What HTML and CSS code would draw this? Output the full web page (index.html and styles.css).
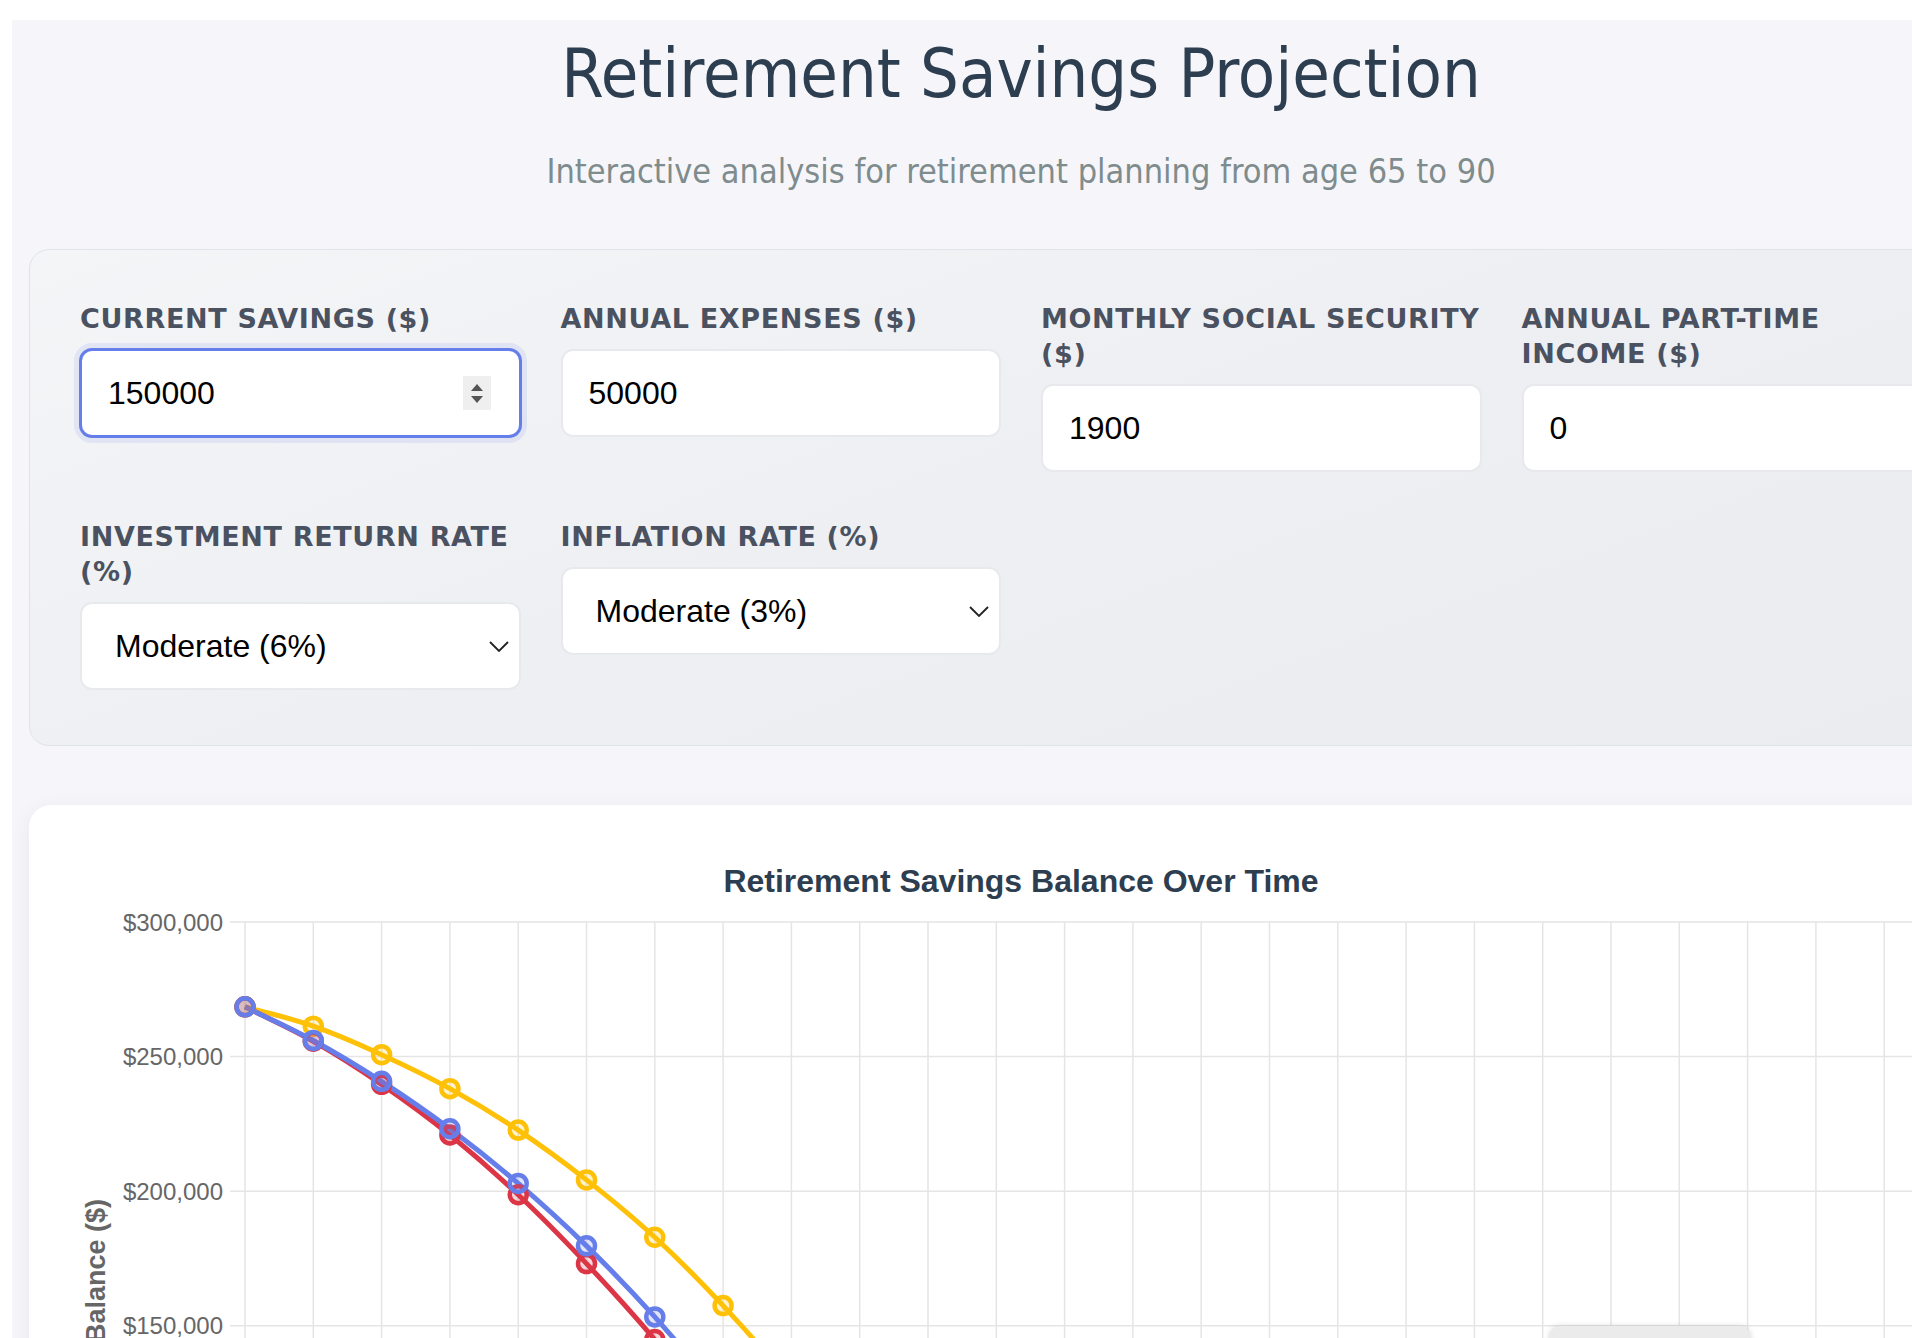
FILE: index.html
```html
<!DOCTYPE html>
<html>
<head>
    <title>Retirement Savings Projection</title>
    <meta charset="UTF-8">
    <meta name="viewport" content="width=device-width, initial-scale=1.0">
    <link rel="stylesheet" href="styles.css">
</head>
<body>
    <div class="container">
        <h1>Retirement Savings Projection</h1>
        <p class="subtitle">Interactive analysis for retirement planning from age 65 to 90</p>

        <div class="controls">
            <div class="control-group">
                <label for="currentSavings">Current Savings ($)</label>
                <div class="field">
                    <input type="text" id="currentSavings" class="focused" value="150000">
                    <span class="spinner"><span class="up"></span><span class="down"></span></span>
                </div>
            </div>
            <div class="control-group">
                <label for="annualExpenses">Annual Expenses ($)</label>
                <div class="field">
                    <input type="text" id="annualExpenses" value="50000">
                </div>
            </div>
            <div class="control-group">
                <label for="socialSecurity">Monthly Social Security ($)</label>
                <div class="field">
                    <input type="text" id="socialSecurity" value="1900">
                </div>
            </div>
            <div class="control-group">
                <label for="partTime">Annual Part-Time<br>Income ($)</label>
                <div class="field">
                    <input type="text" id="partTime" value="0">
                </div>
            </div>
            <div class="control-group">
                <label for="returnRate">Investment Return Rate (%)</label>
                <div class="field">
                    <select id="returnRate">
                        <option>Conservative (4%)</option>
                        <option selected>Moderate (6%)</option>
                        <option>Aggressive (8%)</option>
                    </select>
                    <svg class="chevron" viewBox="0 0 20 11"><path d="M1 1 L10 10 L19 1"/></svg>
                </div>
            </div>
            <div class="control-group">
                <label for="inflationRate">Inflation Rate (%)</label>
                <div class="field">
                    <select id="inflationRate">
                        <option>Low (2%)</option>
                        <option selected>Moderate (3%)</option>
                        <option>High (4%)</option>
                    </select>
                    <svg class="chevron" viewBox="0 0 20 11"><path d="M1 1 L10 10 L19 1"/></svg>
                </div>
            </div>
        </div>

        <div class="chart-card">
            <svg id="chart" class="chart" width="1984" height="1040" viewBox="0 0 1984 1040"></svg>
        </div>
    </div>

    <script>
        (function () {
            const NS = 'http://www.w3.org/2000/svg';
            const chart = document.getElementById('chart');

            const areaLeft = 216, areaTop = 117, step = 68.3, pxPer50k = 134.6;
            const areaBottom = areaTop + 6 * pxPer50k;
            const areaRight = areaLeft + 25 * step;

            function yPos(v) { return areaTop + (300 - v) / 50 * pxPer50k; }
            function xPos(i) { return areaLeft + i * step; }

            function el(name, attrs, text) {
                const e = document.createElementNS(NS, name);
                for (const k in attrs) e.setAttribute(k, attrs[k]);
                if (text) e.textContent = text;
                chart.appendChild(e);
                return e;
            }

            // Titel
            el('text', { x: 992, y: 87, class: 'chart-title' }, 'Retirement Savings Balance Over Time');

            // Rasterlijnen en labels
            for (let i = 0; i <= 25; i++) {
                el('line', { x1: xPos(i), y1: areaTop, x2: xPos(i), y2: areaBottom + 12, class: 'grid' });
                el('text', { x: xPos(i), y: areaBottom + 42, class: 'tick x-tick' }, String(65 + i));
            }
            for (let v = 0; v <= 300; v += 50) {
                el('line', { x1: areaLeft - 15, y1: yPos(v), x2: areaRight, y2: yPos(v), class: 'grid' });
                const label = v === 0 ? '$0' : '$' + v + ',000';
                el('text', { x: 194, y: yPos(v) + 8.5, class: 'tick y-tick' }, label);
            }

            el('text', { transform: 'translate(76,394) rotate(-90)', class: 'axis-title', 'text-anchor': 'end' }, 'Savings Balance ($)');
            el('text', { x: (areaLeft + areaRight) / 2, y: areaBottom + 90, class: 'axis-title', 'text-anchor': 'middle' }, 'Age');

            function pad(arr) {
                while (arr.length < 26) arr.push(0);
                return arr;
            }

            const series = [
                { color: '#ffc107', fill: 'rgba(255,193,7,0.2)', data: pad([268.5, 261.3, 250.7, 238.1, 222.7, 204.2, 182.9, 157.5, 128.5, 95.5, 58, 17]) },
                { color: '#dc3545', fill: 'rgba(220,53,69,0.2)', data: pad([268.5, 255.7, 239.7, 220.9, 198.7, 173.1, 144.9, 113.4, 78.4, 40]) },
                { color: '#667eea', fill: 'rgba(102,126,234,0.2)', data: pad([268.5, 256.0, 240.8, 223.2, 202.9, 179.7, 153.3, 123.5, 90, 53, 12]) }
            ];

            // Spline zoals Chart.js (tension 0.4)
            function curve(pts) {
                const t = 0.4;
                const cps = pts.map((p, i) => {
                    const prev = pts[i - 1] || p, next = pts[i + 1] || p;
                    const d01 = Math.hypot(p[0] - prev[0], p[1] - prev[1]);
                    const d12 = Math.hypot(next[0] - p[0], next[1] - p[1]);
                    const sum = d01 + d12 || 1;
                    const fa = t * d01 / sum, fb = t * d12 / sum;
                    return {
                        a: [p[0] - fa * (next[0] - prev[0]), p[1] - fa * (next[1] - prev[1])],
                        b: [p[0] + fb * (next[0] - prev[0]), p[1] + fb * (next[1] - prev[1])]
                    };
                });
                let d = 'M' + pts[0][0] + ' ' + pts[0][1];
                for (let i = 1; i < pts.length; i++) {
                    d += ' C' + cps[i - 1].b.join(' ') + ' ' + cps[i].a.join(' ') + ' ' + pts[i].join(' ');
                }
                return d;
            }

            series.forEach(s => {
                const pts = s.data.map((v, i) => [xPos(i), yPos(v)]);
                el('path', { d: curve(pts), stroke: s.color, class: 'line' });
            });
            series.forEach(s => {
                s.data.forEach((v, i) => {
                    el('circle', { cx: xPos(i), cy: yPos(v), r: 8.5, stroke: s.color, fill: s.fill, class: 'point' });
                });
            });

            el('rect', { x: 1521, y: 521, width: 200, height: 90, rx: 10, class: 'tooltip' });
        })();
    </script>
</body>
</html>
```

FILE: styles.css
```css
body {
    margin: 0;
    padding: 20px 0 0 12px;
    background-color: #fff;
    font-family: "DejaVu Sans Condensed", "DejaVu Sans", sans-serif;
}
.container {
    width: 2018px;
    box-sizing: border-box;
    padding: 12px 17px 60px;
    background-color: #f6f6fa;
}
h1 {
    margin: 0;
    text-align: center;
    font-size: 68px;
    font-weight: normal;
    line-height: 84px;
    color: #2c3e50;
}
.subtitle {
    margin: 35px 0 0;
    text-align: center;
    font-size: 34px;
    line-height: 41px;
    color: #7f8c8d;
}
.controls {
    margin-top: 57px;
    padding: 51px 50px 55px;
    border: 1px solid #e0e3e8;
    border-radius: 20px;
    background: linear-gradient(160deg, #f4f5f7 0%, #eeeff2 50%, #ebecef 100%);
    display: grid;
    grid-template-columns: repeat(4, 1fr);
    gap: 47px 40px;
}
.control-group label {
    display: block;
    margin-bottom: 13px;
    font-family: "DejaVu Sans", sans-serif;
    font-weight: bold;
    font-size: 27px;
    line-height: 35px;
    letter-spacing: 0.65px;
    text-transform: uppercase;
    color: #4a5160;
}
.field {
    position: relative;
}
.field input,
.field select {
    display: block;
    width: 100%;
    height: 88px;
    box-sizing: border-box;
    border: 2px solid #e7e9ed;
    border-radius: 12px;
    background-color: #fff;
    font-family: "Liberation Sans", Arial, sans-serif;
    font-size: 32px;
    color: #000;
    outline: none;
}
.field input {
    padding: 0 26px;
}
.field select {
    padding: 0 33px;
    appearance: none;
    -webkit-appearance: none;
}
.field input.focused {
    border-color: #667eea;
    box-shadow: 0 0 0 1px #667eea, 0 0 0 6px rgba(102, 126, 234, 0.12);
}
.spinner {
    position: absolute;
    top: 27px;
    right: 30px;
    width: 28px;
    height: 34px;
    background-color: #efefef;
    display: flex;
    flex-direction: column;
    align-items: center;
    justify-content: center;
    gap: 5px;
}
.spinner .up {
    border-left: 6px solid transparent;
    border-right: 6px solid transparent;
    border-bottom: 7px solid #555;
}
.spinner .down {
    border-left: 6px solid transparent;
    border-right: 6px solid transparent;
    border-top: 7px solid #555;
}
.chevron {
    position: absolute;
    right: 12px;
    top: 39px;
    width: 20px;
    height: 11px;
    fill: none;
    stroke: #222;
    stroke-width: 1.8;
    pointer-events: none;
}
.chart-card {
    margin-top: 59px;
    background-color: #fff;
    border-radius: 22px;
    box-shadow: 0 4px 20px rgba(0, 0, 0, 0.06);
}
.chart {
    display: block;
    font-family: "Liberation Sans", Arial, sans-serif;
}
.chart-title {
    font-size: 32px;
    font-weight: bold;
    fill: #2c3e50;
    text-anchor: middle;
}
.grid {
    stroke: #e5e5e5;
    stroke-width: 1.5;
}
.tick {
    font-size: 24px;
    fill: #666;
}
.y-tick {
    text-anchor: end;
}
.x-tick {
    text-anchor: middle;
}
.axis-title {
    font-size: 27px;
    font-weight: bold;
    fill: #666;
}
.line {
    fill: none;
    stroke-width: 5;
}
.point {
    stroke-width: 4.5;
}
.tooltip {
    fill: #ebebeb;
    filter: drop-shadow(0 1px 3px rgba(0, 0, 0, 0.2));
}
```
